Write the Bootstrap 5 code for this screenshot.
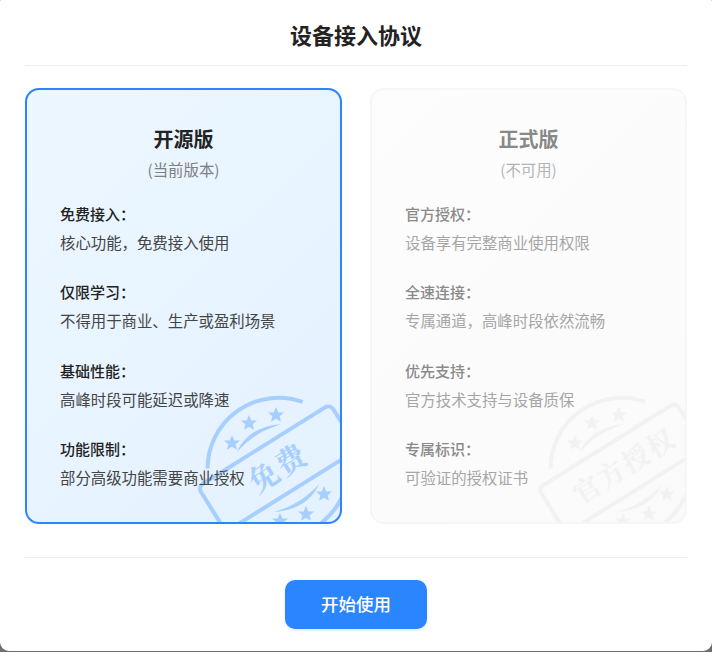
<!DOCTYPE html>
<html lang="zh-CN">
<head>
    <meta charset="UTF-8">
    <meta name="viewport" content="width=device-width, initial-scale=1.0">
    <title>设备接入协议</title>
    <link href="https://cdn.jsdelivr.net/npm/bootstrap@5.3.3/dist/css/bootstrap.min.css" rel="stylesheet">
    <style>
        html, body { height: 100%; background: #6e6e6e; overflow: hidden; }
        body { font-family: "Noto Sans CJK SC", "Liberation Sans", sans-serif; color: #222; }
        .agree-modal { height: 651px; background: #fff; border-radius: 1px 1px 9px 9px; padding: 0 25px; }
        .agree-head { height: 66px; border-bottom: 1px solid #eeeff1; }
        .agree-head h1 { font-size: 22px; line-height: 68px; font-weight: 700; margin: 0; color: #222; }
        .agree-body { height: 492px; padding-top: 22px; padding-bottom: 33px; gap: 28px; border-bottom: 1px solid #eeeff1; }
        .plan { flex: 1 1 0; height: 436px; border-radius: 14px; border: 2px solid #2b85ff; background: linear-gradient(135deg, #ecf7ff 0%, #e4f1ff 100%); overflow: hidden; padding: 34px 33px 0; }
        .plan-off { border-color: #f6f6f6; background: linear-gradient(135deg, #fdfdfd 0%, #fafafa 100%); }
        .plan-name { font-size: 20px; line-height: 30px; font-weight: 700; color: #222; margin: 0; }
        .plan-note { font-size: 15.4px; line-height: 22px; color: #808080; margin: 4px 0 22px; }
        .feat { height: 78.3px; position: relative; z-index: 1; }
        .feat-t { font-size: 15px; line-height: 24px; font-weight: 500; color: #222; margin: 0 0 4px; }
        .feat-d { font-size: 15.4px; line-height: 24px; color: #444; margin: 0; }
        .plan-off .plan-name { color: #888; }
        .plan-off .plan-note { color: #b4b4b4; }
        .plan-off .feat-t { color: #8a8a8a; }
        .plan-off .feat-d { color: #a6a6a6; }
        .stamp { position: absolute; right: 0; bottom: 0; width: 160px; height: 160px; }
        .stamp-on { fill: none; stroke: #a6ceff; stroke-width: 4; }
        .stamp-on .solid { fill: #a6ceff; stroke: none; }
        .stamp-on text { fill: #a6ceff; stroke: none; font: 700 30px "Noto Serif CJK SC", "Noto Sans CJK SC", serif; }
        .stamp-off { fill: none; stroke: #f2f2f2; stroke-width: 4; }
        .stamp-off .solid { fill: #f2f2f2; stroke: none; }
        .stamp-off text { fill: #f2f2f2; stroke: none; font: 700 27px "Noto Serif CJK SC", "Noto Sans CJK SC", serif; }
        .agree-foot { padding-top: 22px; }
        .btn-start { width: 142px; height: 49px; background: #2b85ff; border: 0; border-radius: 10px; color: #fff; font-size: 17.5px; font-weight: 500; box-shadow: 0 1px 3px rgba(43,133,255,.2); }
    </style>
</head>
<body>
    <div class="agree-modal">
        <div class="agree-head text-center"><h1>设备接入协议</h1></div>

        <div class="agree-body d-flex">
            <div class="plan position-relative">
                <h2 class="plan-name text-center">开源版</h2>
                <p class="plan-note text-center">(当前版本)</p>
                <div class="feat"><p class="feat-t">免费接入：</p><p class="feat-d">核心功能，免费接入使用</p></div>
                <div class="feat"><p class="feat-t">仅限学习：</p><p class="feat-d">不得用于商业、生产或盈利场景</p></div>
                <div class="feat"><p class="feat-t">基础性能：</p><p class="feat-d">高峰时段可能延迟或降速</p></div>
                <div class="feat"><p class="feat-t">功能限制：</p><p class="feat-d">部分高级功能需要商业授权</p></div>
                <svg class="stamp stamp-on" viewBox="180 362 160 160">
                    <defs>
                        <polygon id="st" points="0,-8 2.3,-2.6 8,-2.4 3.6,1.2 5,6.8 0,3.7 -5,6.8 -3.6,1.2 -8,-2.4 -2.3,-2.6"/>
                    </defs>
                    <g transform="translate(278 468)">
                        <g transform="rotate(-32)">
                            <path d="M-58 -40 A71 71 0 0 1 58 -40" transform="rotate(-3)"/>
                            <path d="M58 40 A71 71 0 0 1 -58 40" transform="rotate(-3)"/>
                            <rect x="-78" y="-26.5" width="156" height="53" rx="6"/>
                            <text x="0" y="11" text-anchor="middle" letter-spacing="2">免费</text>
                        </g>
                        <g class="solid">
                            <use href="#st" x="-46" y="-25"/><use href="#st" x="-29" y="-45"/><use href="#st" x="-2" y="-53"/>
                            <use href="#st" x="46" y="26"/><use href="#st" x="28" y="46"/><use href="#st" x="2" y="53"/>
                            <path d="M-41 -16 C-34 -32 -20 -42 4 -44 C-16 -38 -28 -30 -41 -16 Z"/>
                            <path d="M41 16 C34 32 20 42 -4 44 C16 38 28 30 41 16 Z"/>
                        </g>
                    </g>
                </svg>
            </div>

            <div class="plan plan-off position-relative">
                <h2 class="plan-name text-center">正式版</h2>
                <p class="plan-note text-center">(不可用)</p>
                <div class="feat"><p class="feat-t">官方授权：</p><p class="feat-d">设备享有完整商业使用权限</p></div>
                <div class="feat"><p class="feat-t">全速连接：</p><p class="feat-d">专属通道，高峰时段依然流畅</p></div>
                <div class="feat"><p class="feat-t">优先支持：</p><p class="feat-d">官方技术支持与设备质保</p></div>
                <div class="feat"><p class="feat-t">专属标识：</p><p class="feat-d">可验证的授权证书</p></div>
                <svg class="stamp stamp-off" viewBox="525 362 160 160">
                    <g transform="translate(621 468)">
                        <g transform="rotate(-32)">
                            <path d="M-58 -40 A71 71 0 0 1 58 -40" transform="rotate(-3)"/>
                            <path d="M58 40 A71 71 0 0 1 -58 40" transform="rotate(-3)"/>
                            <rect x="-81" y="-26.5" width="162" height="53" rx="6"/>
                            <text x="4" y="10" text-anchor="middle" letter-spacing="2">官方授权</text>
                        </g>
                        <g class="solid">
                            <use href="#st" x="-46" y="-25"/><use href="#st" x="-29" y="-45"/><use href="#st" x="-2" y="-53"/>
                            <use href="#st" x="46" y="26"/><use href="#st" x="28" y="46"/><use href="#st" x="2" y="53"/>
                            <path d="M-41 -16 C-34 -32 -20 -42 4 -44 C-16 -38 -28 -30 -41 -16 Z"/>
                            <path d="M41 16 C34 32 20 42 -4 44 C16 38 28 30 41 16 Z"/>
                        </g>
                    </g>
                </svg>
            </div>
        </div>

        <div class="agree-foot text-center">
            <button type="button" class="btn btn-start">开始使用</button>
        </div>
    </div>
<script src="https://cdn.jsdelivr.net/npm/bootstrap@5.3.3/dist/js/bootstrap.bundle.min.js"></script>
</body>
</html>
